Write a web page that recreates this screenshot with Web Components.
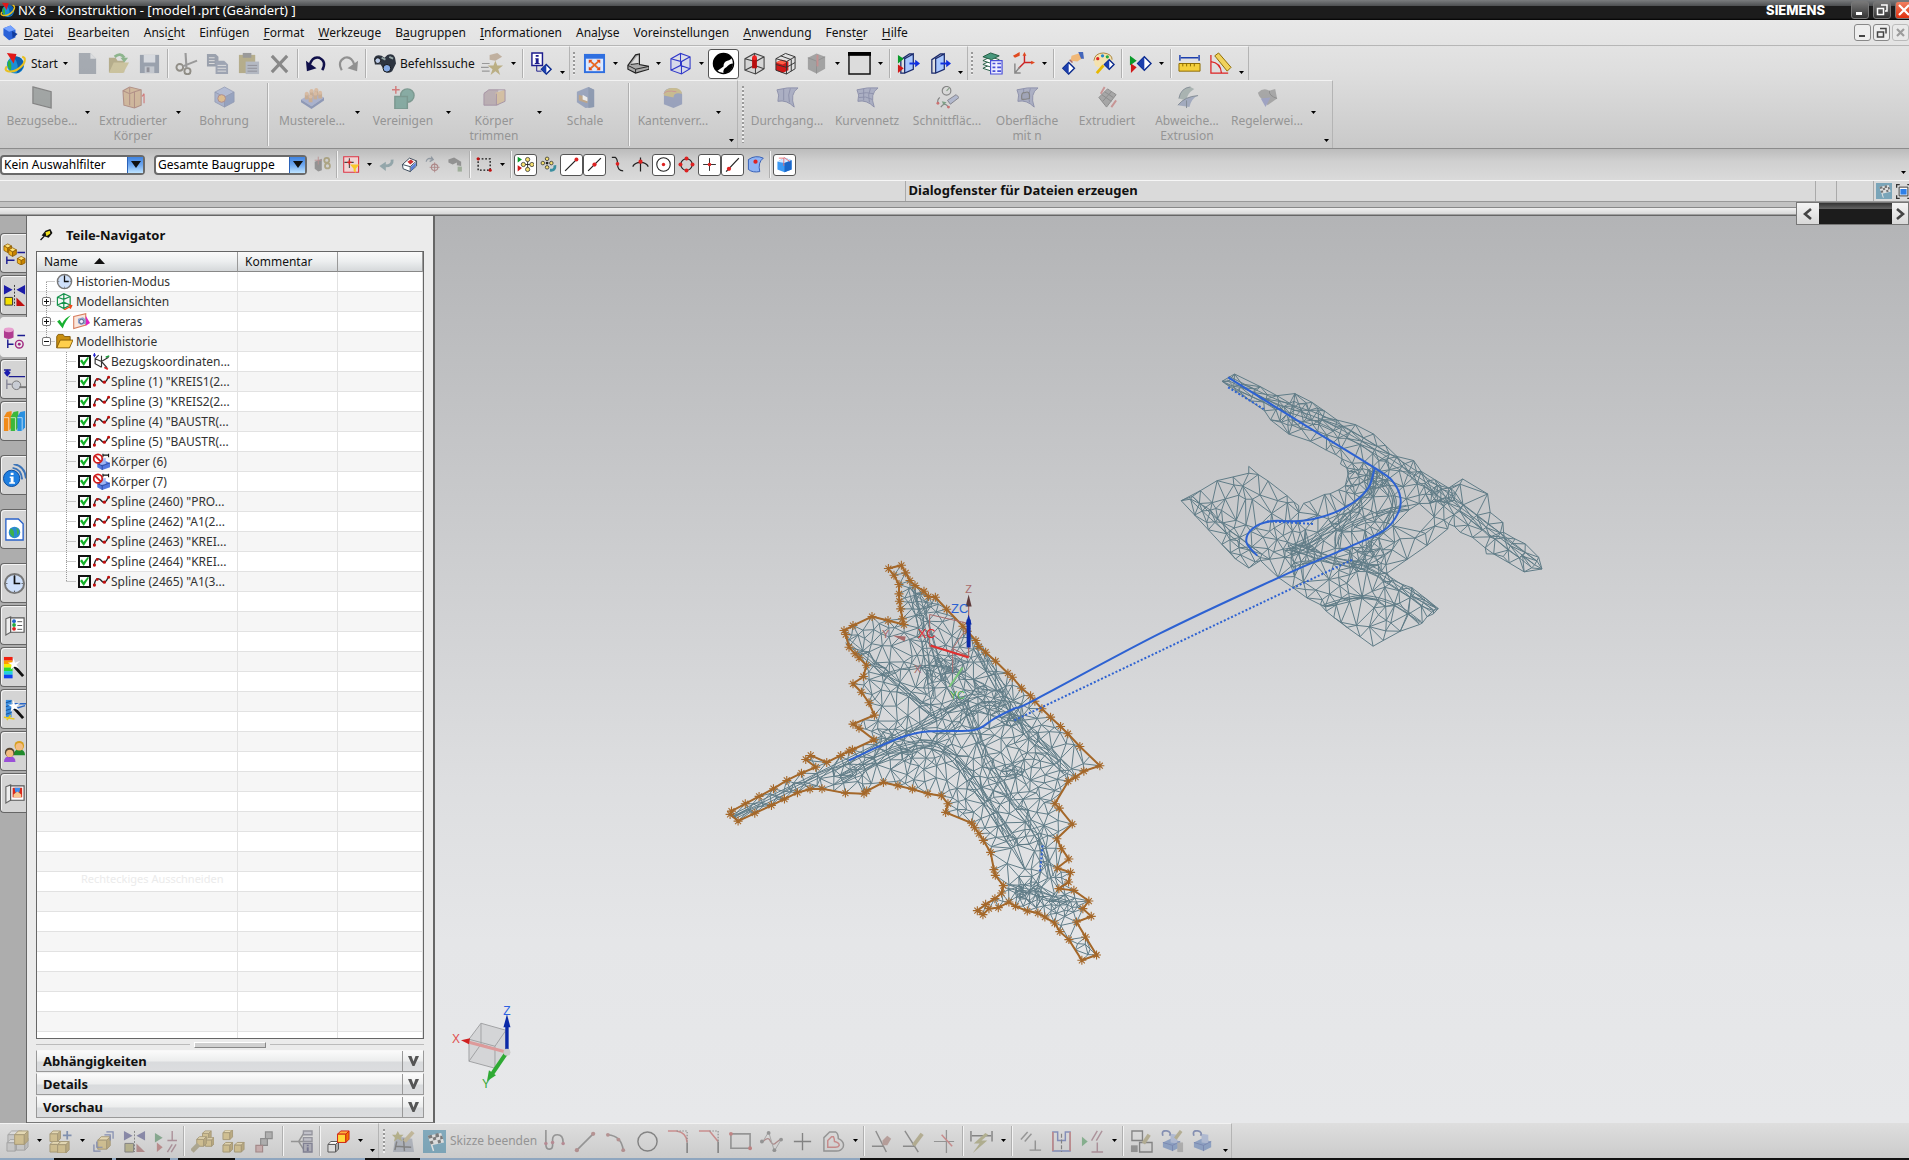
<!DOCTYPE html>
<html lang="de">
<head>
<meta charset="utf-8">
<title>NX 8 - Konstruktion</title>
<style>
html,body{margin:0;height:100%;overflow:hidden}
body{font:12px/16px "Noto Sans","Open Sans",sans-serif;color:#111;background:#d0d0d0}
</style>
</head>
<body>
<nx-app></nx-app>
<script>
const cube=(x,y,s,t='#ffe27a',l='#f2b21c',r='#c98400',k='#8a5a00')=>{const h=s/2,q=s*.27;return `<g stroke="${k}" stroke-width=".8" stroke-linejoin="round"><path fill="${t}" d="M${x} ${y+q}L${x+h} ${y}L${x+s} ${y+q}L${x+h} ${y+2*q}Z"/><path fill="${l}" d="M${x} ${y+q}L${x+h} ${y+2*q}V${y+s+1}L${x} ${y+s-q+1}Z"/><path fill="${r}" d="M${x+s} ${y+q}L${x+h} ${y+2*q}V${y+s+1}L${x+s} ${y+s-q+1}Z"/></g>`};
const box3=(x,y,s,t,l,r,k)=>{const d=s*.28,e=s-d;return `<g stroke="${k}" stroke-width="1" stroke-linejoin="round"><path fill="${t}" d="M${x} ${y+d}L${x+d} ${y}H${x+s}L${x+e} ${y+d}Z"/><path fill="${l}" d="M${x} ${y+d}H${x+e}V${y+s}H${x}Z"/><path fill="${r}" d="M${x+e} ${y+d}L${x+s} ${y}V${y+e}L${x+e} ${y+s}Z"/></g>`};
const gold=(x,y,s)=>box3(x,y,s,'#f0d890','#c9a850','#a08030','#7a6020');
const P=(d,s='#333',w=1.4,f='none',x='')=>`<path d="${d}" stroke="${s}" stroke-width="${w}" fill="${f}" ${x}/>`;
const F=(d,f)=>`<path d="${d}" fill="${f}"/>`;
const C=(x,y,r,f='#c01010',s='none',w=1)=>`<circle cx="${x}" cy="${y}" r="${r}" fill="${f}" stroke="${s}" stroke-width="${w}"/>`;
const wire=(f='#c9d0ff55',k='#3038c8')=>P('M2 7L12 1.5L22 5V17.500L13 23L2 19ZM2 7L13 10L22 5M13 10V23M2 19L12 14L22 17.500M12 1.500V14',k,1.1,f);
const nxlogo='<circle cx="12" cy="13.500" r="9" fill="#1c8fd6"/>'+F('M5 8Q9 12 7 20Q2 14 5 8','#2fb43a')+F('M10 5Q18 3 21 12Q20 20 13 22.500Q17 14 10 5','#0b5fae')+P('M3 15Q0 19 4 20Q12 22 20 13Q24 6 19 5','#e9c020',2.200)+F('M3 1L13 2L10 12Z','#e01818');
const dia=(x,y,s=6)=>`<path d="M${x} ${y-s}L${x+s} ${y}L${x} ${y+s}L${x-s} ${y}Z" fill="#fff" stroke="#0b2a8c" stroke-width="1.500"/><path d="M${x} ${y-s}L${x} ${y+s}L${x-s} ${y}Z" fill="#1c3fae"/>`;
const surf=F('M1 4Q12 1 23 2Q14 8 19 22Q11 14 2 16Q4 9 1 4','#8088b0')+P('M1 4Q12 1 23 2Q14 8 19 22Q11 14 2 16Q4 9 1 4M8 3Q8 9 8 15M15 2.500Q12 9 14 17','#454c80',1);
const flag=F('M0 0H24V24H0Z','#2c7a9f')+P('M6 6L11 22','#eee',1.500)+F('M5 6L19 3L22 13L9 16Z','#e4e4e4')+F('M5 6l4-1l1 3l-4 1zM13 4l3-1l1 4l-4 1zM10 8l3-1l1 3l-3 1zM18 6l2 0l1 3l-3 1zM7 12l3-1l1 3l-3 1zM15 11l3-1l1 3l-3 1z','#222');
const door=F('M8 7L17 2V18L8 22Z','#a9c8ff')+P('M8 7L17 2V18L8 22ZM8 22H4V8L13 2H17','#1a2a6c',1.300)+P('M13 12H22','#1030e0',2)+F('M19 8L24 12L19 16Z','#1030e0');
const plug=F('M2 13L10 9L20 12V18L12 22L2 18Z','#4a6fb0')+F('M10 4L17 5V14L10 13Z','#8a9ecc')+P('M2 13L12 16L20 12M12 16V22','#25408f',1);
const person=(x,y,h,b)=>F(`M${x-6} ${y+10}Q${x-6} ${y+4} ${x} ${y+4}Q${x+6} ${y+4} ${x+6} ${y+10}Z`,b)+C(x,y,5,h)+C(x,y+1,3.800,'#f3bd83');
const clock=C(12,12,10,'#cfe0fa','#777',2)+P('M12 4V12H18','#111',1.800)+P('M12 3.500v1M12 19.500v1M3.500 12h1M19.500 12h1','#333',1.200);
const wand=P('M12 11L21 21','#111',3)+F('M11 2L12.500 7L18 5L14 9L17 13L12 11L8 14L9 9L5 7L10 6.500Z','#fff');
const cross=P('M12 3V21M3 12H21','#333',1.400);
const book=P('M3 5L8 3V19L3 22Z','#666',1.200,'#eee')+P('M8 4H22V19H8Z','#555',1.200,'#fff');
const ICONS={
nx:nxlogo,
part:F('M2 6L12 2L19 8V19L10 23L2 16Z','#2a62d8')+F('M2 6L12 2L19 8L10 11Z','#74a2ff')+F('M14 10L22 14L15 20Z','#123c9c'),
new:F('M3 1H15L21 7V23H3Z','#6c7684')+F('M15 1L21 7H15Z','#d7dade'),
open:F('M2 6H9L11 9H18V21H2Z','#8c7c3a')+F('M2 22L7 11H23L17 22Z','#b8a860')+P('M8 5Q14 0 18 6','#3c8a3c',3)+F('M14 6H22L18 11Z','#3c8a3c'),
save:F('M2 3H22V22H2Z','#56647c')+F('M6 3H18V11H6Z','#cfd5df')+F('M7 15H17V22H7Z','#a9b2c0')+F('M9 16H12V21H9Z','#445'),
cut:C(5,16,3.500,'none','#443f30',2)+C(13,20,3.200,'none','#443f30',2)+P('M11 1L12 17M8 15L23 9','#555',2.200),
copy:F('M1 2H10L13 5V15H1Z','#56627a')+P('M3 6H9M3 9H9M3 12H9','#ddd',1)+F('M10 9H19L23 13V23H10Z','#5f6c88')+P('M12 14H21M12 17H21M12 20H21','#ddd',1),
paste:F('M2 3H19V22H2Z','#8c7c3a')+F('M6 1H15V6H6Z','#555')+F('M9 10H23V23H9Z','#8a94a8')+P('M11 14H21M11 17H21M11 20H21','#445',1),
del:P('M4 4L20 21M20 4L4 21','#333',3.200),
undo:P('M5 13Q8 4 15 6Q23 10 18 19','#10104a',2.600)+F('M1 9L2 20L12 17Z','#10104a'),
redo:P('M19 13Q16 4 9 6Q1 10 6 19','#444',2.200)+F('M23 9L22 20L12 17Z','#444'),
bino:F('M1 7Q3 2 9 4L12 6L15 3Q21 1 23 6L24 12L20 20Q14 24 11 18L8 13L2 13Z','#2d3440')+C(5,9,3,'#b8c8e6','#111')+C(14.500,17,4,'#84a9e4','#111')+P('M9 6L13 8M17 5L21 7','#9aa',2),
star:F('M15 9L17 14L23 14L18 18L20 24L15 20L10 24L12 18L7 14L13 14Z','#98802c')+F('M9 3L17 1L22 5L15 9L9 8Z','#a08060')+P('M1 12H9M0 16H8M1 20H9','#555',1.300),
info:P('M2 1H13V14H2Z','#1c1c8c',1.500,'#fff')+F('M6 3h3v2h-3zM5.500 6.500h3.500v5h1v1h-5v-1h1v-4h-.5z','#1c1c8c')+P('M7 14V20H12','#1c1c8c',1)+dia(17,18,5),
fit:F('M1 2H23V22H1Z','#2f6fe0')+F('M3 7H21V20H3Z','#dce9ff')+P('M7 9L17 18M17 9L7 18','#e86a28',2)+F('M6 8h4l-4 4zM18 8h-4l4 4zM6 19h4l-4-4zM18 19h-4l4-4z','#e04a18'),
orient:P('M2 14L10 3L14 2V13L24 15V18L10 22L2 18Z','#222',1.200,'#aaa')+F('M5 13L11 5L13 4V12Z','#ddd')+P('M2 14L10 18L24 15M10 18V22M5 13L13 12','#222',1),
wire:wire(),
render:C(12,12,10.500,'#fff','#000',1.400)+F('M14 1.700A10.500 10.500 0 0 0 5 20L12 15Q12 10 16 9Q21 8 20 5Q18 2 14 1.700','#000')+F('M22 12A10.500 10.500 0 0 1 12 22.500Q11 18 15 16Q18 12 22 12','#000'),
cyl:wire('#bbb4','#444')+F('M9.500 6H14.500V17H9.500Z','#b80d0d')+C(12,6,2.500,'#e22'),
redcube:F('M2 11L8 8L15 10V19L9 22L2 19Z','#d01818')+F('M2 11L8 8L15 10L9 13Z','#ff6048')+P('M2 7L12 1.500L22 5V17.500L13 23L2 19ZM2 7L13 10L22 5M13 10V23M7 4L18 8V20M2 13L13 16L22 11','#333',1),
graycube:F('M3 6L12 1.500L21 5V17.500L12 22.500L3 18Z','#666')+P('M3 6L12 9.500L21 5M12 9.500V22.500','#444',1)+P('M13 3V15','#a44',2),
bgsq:P('M1 1H23V23H1Z','#111',1.500,'#dcdcdc')+F('M0 0H24V4H0Z','#000'),
doorin:door+F('M1 3L7 7L1 12Z','#0a9a2a')+F('M1 13L7 17L1 22Z','#d01818'),
door:door,
layers:[12,8,4,0].map(i=>F(`M2 ${5+i}L10 ${1+i}L19 ${4+i}L11 ${8+i}Z`,i?'#fff':'#48987c')+P(`M2 ${5+i}L10 ${1+i}L19 ${4+i}L11 ${8+i}Z`,'#245c44',1)).join('')+P('M10 9H22V23H10Z','#4a50d8',1.200,'#eef')+P('M12 12h3M12 16h3M12 20h3M17 12h4M17 16h4M17 20h4','#4a50d8',1.800),
wcs:P('M13 3V11L21 11M13 11L7 17','#c22',1.500)+F('M1 4L8 0L8 4L3 6ZM11 4L13 0L15 4ZM20 9L24 11L20 13Z','#e04a20')+P('M3 12V22H9M3 22L8 16','#888',1.500),
edit:dia(8,17,6)+F('M11 4L20 1L23 6L17 10L10 9Z','#f0b878')+P('M9 8L12 11','#a66',1.500)+F('M18 0L23 0L24 7L21 7Z','#46b'),
palette:F('M2 9Q3 1 12 1Q21 2 21 8Q21 12 15 11Q12 12 13 16Q6 17 3 14Z','#f4e2b0')+P('M2 9Q3 1 12 1Q21 2 21 8','#a8843c',1)+C(6,7,1.700,'#d22')+C(11,4,1.700,'#28c')+C(16,5,1.700,'#2a4')+P('M12 14L5 22','#e8b800',3)+dia(18,13,5),
show:F('M1 4L8 9L1 14Z','#0a9a2a')+F('M2 12L8 16L2 22Z','#d01818')+dia(16,12,7),
ruler:P('M2 3V9M22 3V9M3 6H21','#1c3fae',1.500)+F('M1 12H23V20H1Z','#f4cf3c')+P('M1 12H23V20H1ZM5 12v3M9 12v3M13 12v3M17 12v3','#8c6a00',1),
angle:P('M2 3V22H20M2 10Q12 11 13 22','#d22',1.300)+F('M6 4L10 1L23 16L19 20Z','#f0d25c')+P('M6 4L10 1L23 16L19 20Z','#8c6a00',1),
plane:P('M2 1L21 6V23L2 18Z','#333',1.300,'#6c7472'),
extr:F('M1 5L8 1L20 4V20L13 23L2 20Z','#c99a65')+P('M1 5L8 1L20 4V20L13 23L2 20ZM1 5L8 8L13 6L20 4M13 6V23M8 8V20M8 2V7','#8c4c3a',1.100)+P('M23 18V8M21 11L23 8','#c22',1.200),
hole:cube(2,1,20,'#8ea0d0','#7f90c0','#5870a8','#506090')+C(9,13,4,'#e0a34c','#844'),
patt:F('M0 14L13 7L24 12L11 21Z','#7f90c8')+F('M0 14V17L11 24L24 15V12L11 21Z','#4a5e98')+[[6,12],[11,9],[16,8],[10,15],[15,12],[20,11]].map(p=>F(`M${p[0]-2} ${p[1]-4}h4v6h-4z`,'#b98555')+C(p[0],p[1]-4,2,'#d8a070')).join(''),
unite:C(16,10,7,'#3a8070','#245c4c',1.500)+P('M3 11H16V24H3Z','#245c4c',1.500,'#3a8070')+P('M4 0V8M0 4H8','#c22',1.500),
trim:F('M1 7L6 4H16V20H1Z','#a08890')+F('M13 7L23 4V16L14 20Z','#d0a870')+P('M1 8L6 4H23V16L14 20M14 8V20M1 8V20H14','#757',1),
shell:F('M3 6L15 1L21 4V22L12 23L3 17Z','#5f74a4')+F('M15 1L21 4V22L15 23Z','#48608c')+F('M5 9L14 12V18L5 15Z','#a87840')+F('M9 9L14 12V16L9 14Z','#fff'),
edge:F('M2 8Q2 2 12 2Q21 3 21 9V19L12 23L2 19Z','#5f70a4')+F('M2 8Q3 2 12 2Q20 2 21 8Q12 6 12 12L2 10Z','#b9a04c')+P('M2 8Q4 4 15 6','#b55',1),
surf1:surf, surf2:surf+P('M3 8Q11 6 18 8M3 12Q10 10 17 14','#454c80',1),
sect:C(11,5,4.500,'none','#333',1.200)+P('M11 5L14 2','#363',1.200)+P('M4 12Q1 14 2 18','#333',1.200)+C(2,18,1.500)+F('M12 15L21 9L24 12L15 19Z','#8f9cc6')+P('M12 15L21 9L24 12L15 19Z','#334',1)+P('M5 22Q9 16 13 22','#333',1.200)+F('M6 16L11 17L8 20Z','#2a6a3a')+C(13,22,1.500),
surfn:surf+P('M6 14Q5 6 9 7Q15 4 14 13Q10 14 6 14','#333',1.200,'#6a7298'),
surfe:F('M3 12L12 3L21 9L11 22Z','#777')+P('M3 12L12 3L21 9L11 22ZM6 9L16 16M9 6L18 12M7 16L16 6','#444',1)+P('M5 8L9 1M16 22L21 15','#b55',2),
dev:F('M3 13Q5 2 15 1L19 3Q11 8 11 15Z','#7c908c')+F('M2 20Q9 11 23 10Q16 13 14 22Z','#7080a8')+P('M3 13Q5 2 15 1M2 20Q9 11 23 10M11 15V23','#345',1),
rule:F('M2 7Q8 1 14 5L20 3L22 13L12 20L9 14Q4 14 2 7','#777')+F('M5 13L15 12L10 22Z','#6a72b0')+P('M14 5Q13 10 22 13','#444',1),
mirror:P('M12 1V23','#333',1,'none','stroke-dasharray="2 1.500"')+F('M1 1L10 6L1 11ZM23 1L14 6L23 11Z','#1c1ca8')+P('M2 14H10V22H2Z','#333',1,'#f4e000')+F('M14 14L23 23H14Z','#c01010'),
mirrord:P('M12 1V23','#333',1,'none','stroke-dasharray="2 1.500"')+F('M1 1L10 6L1 11ZM23 1L14 6L23 11Z','#3c3c78')+P('M2 14H11V23H2Z','#333',1,'#98904c')+F('M14 14L23 23H14Z','#904848'),
asm:box3(2,1,14,'#ddd','#bbb','#aaa','#777')+box3(1,10,12,'#ddd','#bbb','#aaa','#777')+box3(11,9,12,'#ddd','#bbb','#aaa','#777')+gold(9,1,14),
add:gold(1,1,11)+gold(1,12,11)+gold(9,12,12)+P('M19 1V10M14.500 5.500H23.500','#2c4c88',1.800),
move:gold(6,7,13)+P('M15 2H22V9M12 0M2 15V22H9M5 12V18H11M13 5H19V11','#33468c',1.300),
cons:F('M1 3L9 8L1 13Z','#3a7a4a')+F('M3 13L9 18L3 23Z','#a04848')+P('M19 1V11M14 11H24','#845060',1.500)+P('M14 23L19 15M18 23L23 15','#845060',1.500),
expl:gold(12,1,9)+gold(15,8,9)+gold(6,7,10)+P('M1 22L8 15','#887c50',5),
expl2:gold(1,0,10)+gold(1,13,10)+gold(13,13,10),
seq:P('M13 2h7v7h-7zM8 9h7v7h-7z','#444',1.200,'#888')+P('M3 16h7v7h-7z','#744',1.200,'#b88'),
wavel:P('M1 12H10M14 4L9 12L14 20M9 12H14','#555',1.500)+P('M14 1H23V5H14ZM14 8H23V12H14Z','#556',1.400,'#aab')+P('M14 14H23V23H14Z','#335',1.400,'#889')+P('M18.500 18V22M18.500 15.500V17','#225',2),
color:box3(1,12,11,'#fff','#ddd','#aaa','#555')+box3(11,1,12,'#ffb040','#ffd83c','#f07800','#d02010'),
sketch:F('M3 10L8 7L21 9L23 23H1Z','#8890a0')+P('M5 12L3 21M4 17L20 18M12 9L13 22','#333',1.500)+P('M13 12L22 2','#a9955c',4)+F('M6 1L8 5L12 5L9 8L11 12L6 9L2 12L3 8L0 5L4 5Z','#908840'),
flag:flag,
profile:P('M3 0V15Q3 20 7 20Q10 20 10 16V10Q10 5 15 5Q21 5 21 13','#555',1.700)+C(3,14,1.800,'#945')+C(10,13,1.800,'#945')+C(21,14,1.800,'#945'),
line:P('M3 21L20 4','#555',1.700)+C(3,21,2.200,'#945050')+C(20,4,2.200,'#945050'),
arc:P('M3 5Q17 6 19 21','#555',1.700)+C(3,5,2,'#945050')+C(14,10,2,'#945050')+C(19,21,2,'#945050'),
circle:C(12,12,10,'none','#333',1.500),
fillet:P('M1 1H10Q21 3 21 13','#b44',1.600)+P('M10 1H21V12','#444',1.200,'none','stroke-dasharray="1.500 1.500"')+P('M21 13V24','#333',1.600),
chamf:P('M1 1H12L21 12','#b44',1.600)+P('M12 1H21V12','#444',1.200,'none','stroke-dasharray="1.500 1.500"')+P('M21 12V24','#333',1.600),
rect:P('M2 4H22V19H2Z','#555',1.700)+C(2,4,2,'#a33')+C(22,19,2,'#a33'),
spl:P('M3 12Q9 6 11 12Q14 17 17 13L21 10','#844',1.400)+P('M3 12L9 2L15 22L22 10','#777',1)+C(2,12,2,'#555')+C(9,3,2,'#555')+C(15,21,2,'#555')+C(22,10,2,'#555'),
pt:cross,
off:P('M2 22V8L8 2H14Q17 3 17 9Q24 12 22 18Q20 22 15 22Z','#555',1.500)+P('M6 18V11L10 7H12Q13 9 13 12Q18 13 18 16Q17 18 14 18Z','#b44',1.500),
qtrim:P('M1 17H13M5 1L16 23','#444',1.500)+F('M12 11L17 6L21 9L17 16L12 16Z','#986860'),
qext:P('M1 17H14M3 1L17 23','#444',1.500)+P('M12 16L21 4','#908450',4),
corner:P('M1 12H22M14 0V24','#555',1.300)+P('M9 5L20 17','#b44',1.600),
dim:P('M1 1V12M23 1V12M2 6H22','#333',1.500)+F('M16 3L4 14H10L3 24L18 11H12L19 5Z','#8c884c'),
geo:P('M2 10L9 2M6 12L13 4M17 11V21M11 21H23','#555',1.500),
sym:P('M3 2H8V11H16V2H21V22H3Z','#33489c',1.500)+P('M3 2V22M21 2V22','#a44',1.700)+P('M12 4V23','#333',1.200,'none','stroke-dasharray="4 2"'),
auto:F('M1 7L7 12L1 17Z','#3a8a4a')+P('M11 11L17 1M16 11L22 1M17 13V23M11 23H23','#845060',1.500),
pencil:P('M2 1H13V11H2ZM10 13H23V23H10Z','#333',1.400)+P('M14 14L20 5','#908450',4)+F('M1 16H8V23H1Z','#555'),
link1:plug+P('M2 6Q0 0 6 1Q11 2 9 6','#33488c',1.800)+P('M15 9L21 1','#908450',3.500)+F('M17 13H23V23H17Z','#888'),
link2:plug+P('M2 6Q0 0 6 1Q11 2 9 6','#33488c',1.800),
find:F('M1 8L11 4V20L6 22L1 18Z','#555')+P('M6 1V12M1 6H11','#a55',1.200)+C(18,6,3.500,'none','#8a7a3a',2.500)+C(19,14,3.500,'none','#8a7a3a',2.500),
filt:P('M1 1H22V23H1Z','#d34',1.500,'#f0d4d4')+P('M9 3V17M2 9H15','#444',1.500)+P('M6 9H12M9 6V12','#d22',2)+F('M10 12H23L18 18V24L15 21V18Z','#f8c828'),
back:P('M20 5Q21 14 10 14','#567c84',4)+F('M11 8V21L2 14Z','#567c84'),
erase:F('M2 12L12 3L22 7V14L13 22L3 18Z','#fff')+P('M2 12L12 3L22 7V14L13 22L3 18ZM2 12L13 15L22 7M13 15V22','#345',1.300)+F('M9 8L14 5L18 8L13 12Z','#c33')+F('M14 15L21 9V14L14 21Z','#5b80d8'),
rot:P('M3 8Q5 1 12 5M10 1L13 5L8 8','#567',1.800)+C(15,16,4.500,'none','#8a4040',1.500)+P('M15 9V23M8 16H22','#8a4040',1.300),
pick:F('M2 5L10 2L20 8V14L14 13V9L8 12L2 9Z','#555')+F('M15 15H21V22H15Z','#6a8860'),
box:P('M3 4H20V20H3Z','#111',1.800,'none','stroke-dasharray="2.500 2.500"')+C(3,4,2.200)+C(20,20,2.200),
snap:F('M1 1L7 5L1 9Z','#0a9a2a')+F('M1 13L7 17L1 22Z','#d01818')+C(15,5,3,'#f5e070','#222')+C(9,12,3,'#f5e070','#222')+C(21,12,3,'#f5e070','#222')+C(15,19,3,'#f5e070','#222')+P('M15 8V16M12 12H18','#222',1.300),
snap2:C(10,4,2.500,'#f5e070','#222')+C(4,10,2.500,'#f5e070','#222')+C(16,10,2.500,'#f5e070','#222')+C(10,10,2,'#222')+C(10,16,2.500,'#f5e070','#222')+P('M21 13Q22 21 14 20','#3b8fa0',4),
end:P('M3 21L20 4','#222',1.800)+C(19,5,2.800,'#d22'),
mid:P('M3 21L21 3','#222',1.800)+C(12,12,3,'#d22'),
ctrl:P('M4 2H9Q12 4 12 11Q12 21 20 21','#222',1.700)+C(12,11,2.600,'#d22'),
inter:P('M12 2V22M1 15Q4 9 12 9Q20 9 23 15','#222',1.700)+C(12,8,3,'#d22'),
center:C(12,12,9.500,'none','#222',1.500)+C(12,12,2.400,'#d22'),
quad:C(12,12,8,'none','#222',1.500)+C(12,3.500,2.800,'#d22')+C(12,20.500,2.800,'#d22')+C(3.500,12,2.800,'#d22')+C(20.500,12,2.800,'#d22'),
exist:cross+C(12,12,2.500,'#d22'),
curve:P('M3 22L21 3','#222',1.800)+C(7,18,3,'#d22'),
face:F('M2 5Q12 -2 23 3Q15 9 18 22Q8 24 2 19Z','#8fb4f4')+P('M2 5Q12 -2 23 3Q15 9 18 22Q8 24 2 19Z','#2450b0',1.200)+C(12,8,3,'#d22'),
solid:F('M2 8L12 2L22 6V19L12 23L2 19Z','#3d9af4')+F('M2 8L12 2L22 6L12 10Z','#d4e8ff')+F('M12 10L22 6V19L12 23Z','#1a66c8')+P('M4 3H11V14M11 2L20 8','#e66',1.200),
r1:cube(1,2,8)+cube(6,6,8)+cube(15,15,8)+P('M15 11H23M4 15V23M4 19H12','#1c1c90',1.500),
r3:F('M1 4V12Q6 15 11 12V4Z','#b03c90')+'<ellipse cx="6" cy="4" rx="5" ry="2.500" fill="#e8a0d0"/>'+P('M15 10H23M5 14V23M5 19H11','#1c1c90',1.500)+C(17,19,4,'none','#a02880',1.500)+C(17,19,1.500,'#a02880'),
r4:P('M1 2H8M4.500 2V8M6 9H23','#1c1c90',1.500)+F('M1 5L4.500 1.500L8 5L4.500 9Z','#1c1cb0')+P('M4 12V22M4 17H9','#889',1.500)+C(14,18,4.500,'#c8ccd4','#777')+P('M17 20H24','#777',2),
r5:[['#f08a18',1],['#3cb83c',8],['#2a90e0',15]].map(a=>F(`M${a[1]} 7L${a[1]+3} 2L${a[1]+8} 1V18L${a[1]+5} 22H${a[1]}Z`,a[0])+P(`M${a[1]+5} 8V22M${a[1]} 8H${a[1]+5}`,'#fffa',1)).join(''),
r6:C(9,15,8.500,'#1f7fe0','#0b4a9c')+F('M8 9h3v2.500h-3zM7 13h4v6h1.500v1.500h-6v-1.500h1.500v-4.500h-1z','#fff')+P('M10 4Q19 5 20 16M11 0Q23 2 24 15','#3c74b8',2),
r7:P('M3 1H16L21 6V23H3Z','#2a62c8',1.400,'#fff')+C(12,15,6,'#2a8ad0')+F('M8 11Q13 12 11 20Q7 18 7 13ZM14 10Q19 14 15 18Z','#3cb04c'),
clock:clock,
r9:book+C(11.500,7.500,2,'#26c')+C(11.500,11.500,2,'#2a4')+C(11.500,15.500,2,'#d22')+P('M15 8h5M15 12h5M15 16h5','#555',1),
r10:['#f02010','#ff9a00','#f4f000','#30d830','#20d0e0','#1040f0'].map((c,i)=>`<rect x="1" y="${1+i*3.700}" width="9" height="3.800" fill="${c}"/>`).join('')+wand,
r11:F('M3 2H9V20H3Z','#3c8fe0')+P('M3 5l6-2M3 9l6-2M3 13l6-2M3 17l6-2','#134f98',1)+P('M10 6H24M10 12L23 8','#2a68c8',1.500)+P('M1 20L12 22M4 23L8 18','#e8c820',1.600)+wand,
r12:person(17,6,'#d8a020','#1f8a2c')+person(7,13,'#5a4630','#9a50d8'),
r13:book+F('M10 6H20V16H10Z','#d82a1c')+F('M12 6H18L17 11H13Z','#3c8ff0')+F('M11 13L15 10L19 13V16H11Z','#f8c890'),
views:P('M2 6L11 1L20 5V17L11 22L2 17ZM2 6L11 9L20 5M11 9V22M2 17L11 13L20 17M11 1V13','#16934c',1.700)+P('M11 24L22 18M18 17L22 18L20 22','#f04a18',2),
camera:P('M1 5L18 1V17L1 22Z','#d67a5a',1.500,'#fbe6dc')+F('M18 4L24 14L18 18Z','#e020c0')+F('M7 8L14 6L18 9V15L11 17L7 14Z','#8ba4d0')+C(12,12,3,'#eef','#446'),
folder:F('M1 5L3 2H10L12 5H20V20H1Z','#c98f10')+F('M1 21L6 10H24L19 21Z','#ffcf4c')+P('M1 21L6 10H24L19 21ZM1 21V5L3 2H10L12 5H20V10','#7c5400',1.200),
csys:P('M12 4V20M12 12L22 6M12 12L20 21M12 12L3 8M12 20L3 15V8L8 3','#333',1.600)+P('M2 0V6M0 3H4','#22c',1.500)+P('M18 6L23 4','#1a9a3a',2)+P('M16 20L21 23','#d22',2.400),
spline:P('M2 16Q3 9 7 8Q10 8 13 12Q17 16 21 7','#222',1.900)+C(2,17,2.300)+C(6,9,2)+C(16,13,2.300)+C(22,6,2.200),
body:F('M6 15L17 11L24 14V20L13 24L6 20Z','#5278e0')+F('M10 8L18 7V16L10 17Z','#9fb6f2')+P('M6 15L13 18L24 14M13 18V24','#24408c',1)+P('M14 3H22M14 1V6M22 1V6','#111',1.500)+C(7,8,6,'#fff','#d01c1c',2.500)+P('M3 4L11 12','#d01c1c',2.500),
check:F('M1 12L5 9L9 15Q14 6 23 2Q14 11 10 23Z','#18b030'),
pin:F('M3 14L10 5L19 2L23 9L16 18Z','#111')+F('M10 8L18 5L19 10L12 15Z','#f0e020')+P('M1 22L8 15','#111',2.500),
grow:P('M1 6V1H6M18 1H23V6M23 18V23H18M6 23H1V18','#333',2)+P('M5 5H19V19H5Z','#333',1.500,'#fff')+F('M7 8H17V17H7Z','#2f80e8')
};
const svg=(n,s)=>`<svg viewBox="0 0 24 24" width="${s}" height="${s}" aria-hidden="true">${ICONS[n]||''}</svg>`;
const BTN='button{font:inherit;color:inherit;border:0;background:none;padding:0;margin:0;display:flex;align-items:center;justify-content:center}svg{display:block;flex:none}';
const def=(tag,css,html)=>customElements.define(tag,class extends HTMLElement{connectedCallback(){if(this.shadowRoot)return;const r=this.attachShadow({mode:'open'});r.innerHTML=`<style>*{box-sizing:border-box}${BTN}${css}</style>${typeof html==='function'?html(this):html}`}});

/* toolbar parts */
def('nx-sep',':host{flex:none;width:6px;align-self:stretch;display:flex;justify-content:center;padding:2px 0}:host([wide]){width:10px}i{width:2px;background:linear-gradient(90deg,#b0b0b0 50%,#f4f4f4 50%)}','<i></i>');
def('nx-grip',':host{flex:none;width:9px;align-self:stretch;display:flex;justify-content:center;padding:5px 0}i{width:2px;background:repeating-linear-gradient(#999 0 2px,#eee 2px 4px)}','<i></i>');
def('nx-drop',':host{flex:none;width:12px;display:flex;align-self:stretch}button{width:100%;padding-bottom:1px}:host([low]) button{align-items:flex-end;padding-bottom:6px}:host([mid]){width:13px}:host([mid]) button{padding-bottom:4px}','<button aria-label="Mehr"><svg width="5" height="3" viewBox="0 0 5 3"><path d="M0 0H5L2.5 3Z" fill="#000"/></svg></button>');
def('nx-tool',':host{flex:none;display:flex;width:31px;height:30px}:host([label]){width:auto}:host([small]){width:23px;height:22px}button{width:100%;height:100%;gap:4px}:host([on]) button{border:1px solid #555;border-radius:3px;background:#fff}:host([off]) svg{opacity:.5}:host([off]) button{color:#949494}:host([label]) button{padding:0 2px 0 4px}',
 e=>`<button aria-label="${e.getAttribute('label')||e.getAttribute('icon')}">${svg(e.getAttribute('icon'),e.hasAttribute('small')?17:23)}<slot></slot></button>`);
def('nx-big',':host{flex:none;width:78px;display:flex;align-self:stretch}:host([w]){width:80px}button{width:100%;flex-direction:column;justify-content:flex-start;color:#959595;padding-top:5px;line-height:15px;gap:4px}svg{opacity:.5}',
 e=>`<button>${svg(e.getAttribute('icon'),23)}<span><slot></slot></span></button>`);
def('nx-toolbar',':host{display:flex;align-items:center;border-top:1px solid #f2f2f2;border-right:1px solid #b4b4b4}','<slot></slot>');
def('nx-select',':host{display:flex;width:145px;height:20px}label{display:flex;flex:1;border:2px solid #6a6a6a;border-radius:4px;background:#fff}select{appearance:none;border:0;background:none;font:inherit;color:#000;flex:1;min-width:0;padding:0 0 0 2px;margin:0;line-height:16px}i{width:16px;border-left:1px solid #2a62b8;background:linear-gradient(#3f83e0,#6fa8f0 50%,#bfe4ff);display:flex;align-items:center;justify-content:center}',
 e=>`<label><select aria-label="${e.getAttribute('name')}"><option>${e.getAttribute('value')}</option></select><i><svg width="10" height="7" viewBox="0 0 10 7"><path d="M0 0H10L5 7Z" fill="#111"/></svg></i></label>`);

/* title and menu */
def('nx-title',':host{display:flex;align-items:center;height:20px;background:linear-gradient(#7a7c7e 0,#4c4e50 6px,#1c1c1c 6px,#1c1c1c 18px,#000);color:#fff;gap:2px}h1{font:13px/16px "Noto Sans",sans-serif;margin:0;flex:1}b{font:800 13px/16px Inter,sans-serif;margin-right:22px}button{width:18px;height:18px;border:1px solid #777;border-radius:3px;background:linear-gradient(#777,#333);margin-left:2px}.x{background:linear-gradient(#f08060,#e03010);margin-right:-4px}',
 `${svg('nx',16)}<h1>NX 8 - Konstruktion - [model1.prt (Geändert) ]</h1><b>SIEMENS</b>
 <button aria-label="Minimieren"><svg width="12" height="12"><path d="M2 8h6v3H2z" fill="#fff"/></svg></button><button aria-label="Wiederherstellen"><svg width="12" height="12"><path d="M5 1h6v6h-2M1.500 4.500h6v6h-6z" fill="none" stroke="#fff" stroke-width="1.500"/></svg></button><button class="x" aria-label="Schließen"><svg width="12" height="12"><path d="M1 1L11 11M11 1L1 11" stroke="#fff" stroke-width="2.200"/></svg></button>`);
def('nx-menu',':host{display:flex;align-items:center;height:26px;padding-left:2px;border-bottom:1px solid #b6b6b6}nav{display:flex;flex:1;gap:14px;padding-left:5px}u{text-underline-offset:2px}.w{width:17px;height:17px;border:1px solid #888;border-radius:3px;background:#eee;margin-left:2px;color:#555}.w:last-child{opacity:.45}',
 svg('part',17)+'<nav>'+['<u>D</u>atei','<u>B</u>earbeiten','Ansi<u>c</u>ht','Einfügen','<u>F</u>ormat','<u>W</u>erkzeuge','B<u>a</u>ugruppen','<u>I</u>nformationen','Ana<u>l</u>yse','Voreinstellungen','<u>A</u>nwendung','Fenst<u>e</u>r','<u>H</u>ilfe'].map(t=>`<button><span>${t}</span></button>`).join('')+'</nav><button class="w" aria-label="Fenster minimieren"><svg width="11" height="11"><path d="M2 8h6v2H2z" fill="#444"/></svg></button><button class="w" aria-label="Fenster wiederherstellen"><svg width="11" height="11"><path d="M4 1.500h6v5M1.500 5h6v5h-6z" fill="none" stroke="#444" stroke-width="1.500"/></svg></button><button class="w" aria-label="Fenster schließen"><svg width="11" height="11"><path d="M2 2L9 9M9 2L2 9" stroke="#444" stroke-width="2.200"/></svg></button>');
def('nx-cue',':host{display:flex;height:22px;border-top:1px solid #f6f6f6;border-bottom:1px solid #999;background:#dadada}.l{flex:905 1 0;border-right:1px solid #aaa}.t{flex:907 1 0;padding-left:3px;font:bold 13px/18px "Noto Sans",sans-serif}.s{width:21px;border-left:1px solid #aaa}.m{width:37px}.i{display:flex;width:36px;gap:4px;border-left:1px solid #aaa;align-items:center;padding-left:2px;overflow:hidden}.i svg:first-child{opacity:.55}',
 `<div class="l"></div><div class="t">Dialogfenster für Dateien erzeugen</div><div class="s"></div><div class="s m"></div><div class="i">${svg('flag',16)}${svg('grow',15)}</div>`);

/* left side */
def('nx-rail',':host{display:flex;flex-direction:column;gap:2px;width:27px;flex:none;padding-top:17px;background:#adadad;border-right:1px solid #666}button{height:40px;width:26px;border:1px solid #666;border-width:1px 0 1px 1px;border-radius:4px 0 0 4px;background:#d4d4d4;box-shadow:inset 1px 1px #f4f4f4;padding-left:1px;flex:none}.a{background:#ebebeb;border-color:#ebebeb;width:27px;box-shadow:none}.g{margin-top:12px}',
 [['r1'],['mirror'],['r3','a'],['r4'],['r5'],['r6','g'],['r7','g'],['clock','g'],['r9'],['r10'],['r11'],['r12'],['r13']].map(a=>`<button class="${a[1]||''}" aria-label="${a[0]}">${svg(a[0],23)}</button>`).join(''));
def('nx-tree',':host{display:block;flex:1;min-height:0;overflow:hidden;border:1px solid #666;background:#fff}table{border-collapse:separate;border-spacing:0;table-layout:fixed;width:100%;color:#333}th{font-weight:normal;text-align:left;color:#111;height:20px;background:linear-gradient(#fafafa,#eceeef 50%,#d5d8da);border-bottom:1px solid #888;border-right:1px solid #999;padding:0 0 0 7px}th svg{display:inline-block;margin-left:13px;vertical-align:2px}td{height:20px;padding:0;border-bottom:1px solid #e2e2e2;border-right:1px solid #e2e2e2;overflow:hidden;white-space:nowrap}tr:nth-child(even) td{background:#f6f6f6}td>div{display:flex;align-items:center;height:19px}td .c{gap:1px}.r .ic{margin-left:1px}.r span{padding-left:3px}td .ghost{color:#ebebeb;padding-left:44px;font-size:11px;align-items:flex-start;line-height:13px}input{appearance:none;width:13px;height:13px;margin:0 1px 0 0;border:2px solid #111;background:#fff;display:grid;flex:none}input::before{content:"";background:#14b428;clip-path:polygon(0 45%,22% 25%,40% 55%,85% 0,100% 8%,42% 100%)}',
 ()=>{const dot='stroke="#999" stroke-dasharray="1 1"';
 const roots=[['clock','Historien-Modus',0,0],['views','Modellansichten',1,0],['camera','Kameras',1,1],['folder','Modellhistorie',2,0]];
 const kids=[['csys','Bezugskoordinaten...'],['spline','Spline (1) "KREIS1(2...'],['spline','Spline (3) "KREIS2(2...'],['spline','Spline (4) "BAUSTR(...'],['spline','Spline (5) "BAUSTR(...'],['body','Körper (6)'],['body','Körper (7)'],['spline','Spline (2460) "PRO...'],['spline','Spline (2462) "A1(2...'],['spline','Spline (2463) "KREI...'],['spline','Spline (2464) "KREI...'],['spline','Spline (2465) "A1(3...']];
 let h='<table><colgroup><col style="width:201px"><col style="width:100px"><col></colgroup><thead><tr><th>Name <svg width="11" height="6"><path d="M0 6L5.500 0L11 6Z" fill="#111"/></svg></th><th>Kommentar</th><th></th></tr></thead><tbody>';
 const row=c=>{h+=`<tr><td>${c}</td><td></td><td></td></tr>`};
 roots.forEach((r,i)=>{const box=r[2]?`<rect x="5.500" y="5.500" width="8" height="8" rx="1.500" fill="#fff" stroke="#777"/><path d="M7 9.500h5${r[2]==1?'M9.500 7v5':''}" stroke="#111"/>`:'';
  row(`<div class="r"><svg width="18" height="19"><path d="M9.500 ${i?0:10}V${i==3?6:19}M9.500 9.500H18" ${dot}/>${box}</svg>${r[3]?`<svg width="16" height="15" viewBox="0 0 24 24" class="ic">${ICONS.check}</svg>`:''}<svg class="ic" width="17" height="17" viewBox="0 0 24 24">${ICONS[r[0]]}</svg><span>${r[1]}</span></div>`)});
 kids.forEach((k,i)=>row(`<div class="c"><svg width="40" height="19"><path d="M29.500 0V${i==11?10:19}M29.500 9.500H39" ${dot}/></svg><input type="checkbox" checked aria-label='${k[1]}'>${svg(k[0],17)}<span>${k[1]}</span></div>`));
 for(let i=0;i<23;i++)row(i==14?'<div class="ghost">Rechteckiges Ausschneiden</div>':'');
 return h+'</tbody></table>'});
def('nx-fold',':host{display:flex;height:22px;border:1px solid #999;border-top-color:#f8f8f8;background:linear-gradient(#fbfbfb,#eceded 50%,#d9dbdd 55%,#dcdddf)}button{width:100%;font:bold 13px/16px "Noto Sans",sans-serif;justify-content:flex-start;padding-left:6px}span{flex:1;text-align:left}i{width:21px;align-self:stretch;border-left:1px solid #999;display:flex;align-items:center;justify-content:center}','<button><span><slot></slot></span><i><svg width="13" height="10"><path d="M1 0H4.500L6.500 5.500L8.500 0H12L7.500 10H5.500Z" fill="#555"/></svg></i></button>');
def('nx-navigator',':host{display:flex;flex-direction:column;width:408px;flex:none;background:#ebebeb;border-right:2px solid #666;border-bottom:1px solid #777;padding:0 9px 4px}header{display:flex;align-items:center;height:35px;flex:none;gap:13px;padding:2px 0 0 4px}h2{font:bold 13px/16px "Noto Sans",sans-serif;margin:0}.split{display:flex;align-items:center;gap:4px;height:11px;flex:none}.split hr{flex:1;border:0;border-top:1px solid #bbb;margin:0}.split i{width:72px;height:6px;background:#d0d0d0;border:1px solid;border-color:#fff #888 #888 #fff}.f{display:flex;flex-direction:column;gap:1px}',
 `<header>${svg('pin',13)}<h2>Teile-Navigator</h2></header><nx-tree></nx-tree><div class="split"><hr><i></i><hr></div><div class="f"><nx-fold>Abhängigkeiten</nx-fold><nx-fold>Details</nx-fold><nx-fold>Vorschau</nx-fold></div>`);

/* 3D view: terrain meshes triangulated from outlines, roads and scattered points */
const pts=(s,ox,oy)=>s.trim().split(/\s+/).map(p=>p.split(',').map(Number)).map(([x,y])=>[ox+x/3,oy+y/3]);
let seed=7;const rnd=()=>(seed=(seed*16807)%2147483647)/2147483647;
const inside=(p,g)=>{let c=false;for(let i=0,j=g.length-1;i<g.length;j=i++){const a=g[i],b=g[j];if((a[1]>p[1])!=(b[1]>p[1])&&p[0]<(b[0]-a[0])*(p[1]-a[1])/(b[1]-a[1])+a[0])c=!c}return c};
const along=(l,step)=>{const o=[];for(let i=1;i<l.length;i++){const a=l[i-1],b=l[i],d=Math.hypot(b[0]-a[0],b[1]-a[1]),n=Math.max(1,Math.round(d/step));for(let k=0;k<n;k++)o.push([a[0]+(b[0]-a[0])*k/n,a[1]+(b[1]-a[1])*k/n])}o.push(l[l.length-1]);return o};
function smooth(p){let d=`M${p[0][0].toFixed(1)} ${p[0][1].toFixed(1)}`;for(let i=0;i<p.length-1;i++){const a=p[i-1]||p[i],b=p[i],c=p[i+1],e=p[i+2]||c;d+=`C${[b[0]+(c[0]-a[0])/6,b[1]+(c[1]-a[1])/6,c[0]-(e[0]-b[0])/6,c[1]-(e[1]-b[1])/6,c[0],c[1]].map(v=>v.toFixed(1)).join(' ')}`}return d}
function delaunay(P){const n=P.length,Q=P.concat([[-9000,-9000],[12000,-9000],[1000,14000]]);
 const mk=(a,b,c)=>{const[ax,ay]=Q[a],[bx,by]=Q[b],[cx,cy]=Q[c],d=2*(ax*(by-cy)+bx*(cy-ay)+cx*(ay-by));if(Math.abs(d)<1e-9)return null;const A=ax*ax+ay*ay,B=bx*bx+by*by,D=cx*cx+cy*cy,x=(A*(by-cy)+B*(cy-ay)+D*(ay-by))/d,y=(A*(cx-bx)+B*(ax-cx)+D*(bx-ax))/d;return{v:[a,b,c],x,y,r:(ax-x)**2+(ay-y)**2}};
 let T=[mk(n,n+1,n+2)];
 for(let i=0;i<n;i++){const[x,y]=Q[i],keep=[],E=new Map();
  for(const t of T){if((t.x-x)**2+(t.y-y)**2<t.r){const[a,b,c]=t.v;for(const[e,f]of[[a,b],[b,c],[c,a]]){const k=e<f?e*9999+f:f*9999+e;E.has(k)?E.set(k,null):E.set(k,[e,f])}}else keep.push(t)}
  for(const e of E.values())if(e){const t=mk(e[0],e[1],i);if(t)keep.push(t)}T=keep}
 return T.filter(t=>t.v.every(v=>v<n))}
/* clusters: [x, y, radius, points] patches of finer survey data */
function mesh(outline,roads,count,holes,edge,clusters){
 const pool=along(outline.concat([outline[0]]),edge).map(p=>[p[0]+(rnd()-.5)*.2,p[1]+(rnd()-.5)*.2]);
 let lines='';
 for(const[r,offs]of roads)for(const o of offs){const m=r.map((p,i)=>{const a=r[Math.max(0,i-1)],b=r[Math.min(r.length-1,i+1)],d=Math.hypot(b[0]-a[0],b[1]-a[1])||1;return[p[0]-(b[1]-a[1])/d*o,p[1]+(b[0]-a[0])/d*o]});lines+=smooth(m);for(const p of along(m,15))if(inside(p,outline))pool.push([p[0]+rnd()*2,p[1]+rnd()*2])}
 const ok=p=>inside(p,outline)&&!holes.some(h=>inside(p,h));
 for(const[cx,cy,cr,cn]of clusters)for(let i=0;i<cn;i++){const a=rnd()*6.283,q=cr*Math.sqrt(rnd()),p=[cx+Math.cos(a)*q,cy+Math.sin(a)*q*.7];if(ok(p))pool.push(p)}
 const xs=outline.map(p=>p[0]),ys=outline.map(p=>p[1]),x0=Math.min(...xs),x1=Math.max(...xs),y0=Math.min(...ys),y1=Math.max(...ys);
 let k=0,g=0;while(k<count&&g++<20000){const p=[x0+rnd()*(x1-x0),y0+rnd()*(y1-y0)];if(ok(p)&&pool.every(q=>Math.hypot(q[0]-p[0],q[1]-p[1])>5)){pool.push(p);k++}}
 const seen=new Set();let d='';
 for(const t of delaunay(pool)){const v=t.v.map(i=>pool[i]),c=[(v[0][0]+v[1][0]+v[2][0])/3,(v[0][1]+v[1][1]+v[2][1])/3];if(!inside(c,outline)||holes.some(h=>inside(c,h)))continue;
  for(const[a,b]of[[0,1],[1,2],[2,0]]){const e=t.v[a],f=t.v[b],k=Math.min(e,f)*9999+Math.max(e,f);if(seen.has(k))continue;seen.add(k);d+=`M${pool[e].map(n=>n.toFixed(1))}L${pool[f].map(n=>n.toFixed(1))}`}}
 return d+lines}
def('nx-view',':host{display:block;flex:1;min-width:0;min-height:0;background:linear-gradient(#b3b4b6,#cdced0 38%,#dddee0 62%,#e5e6e8 80%,#e7e8ea)}svg{width:100%;height:100%}text{font-family:"Liberation Sans",sans-serif}',()=>{
 const L=s=>pts(s,700,540),R=s=>pts(s,1160,350);
 const left=L('563,84 602,74 615,97 628,120 643,135 670,152 683,168 704,170 738,206 787,257 800,272 826,300 835,318 855,335 885,362 922,398 935,410 963,443 990,466 1003,482 1024,505 1050,530 1080,558 1102,580 1138,618 1198,676 1150,692 1125,710 1103,722 1063,790 1076,803 1115,851 1069,895 1083,925 1105,956 1070,983 1110,996 1104,1025 1075,1045 1120,1050 1165,1082 1147,1105 1172,1128 1128,1145 1155,1190 1188,1244 1144,1260 1105,1198 1078,1174 1062,1148 1033,1130 1012,1118 980,1112 945,1098 925,1085 893,1102 865,1105 847,1123 830,1111 855,1092 883,1075 903,1058 908,1036 884,1005 880,988 870,936 848,900 835,880 822,862 813,848 735,816 742,790 722,766 682,760 635,746 548,726 498,752 490,760 434,758 364,745 328,746 290,757 212,795 112,842 88,822 92,812 175,768 218,745 258,720 302,698 345,680 315,657 330,645 378,666 420,645 445,632 455,628 520,598 475,563 457,551 521,524 505,487 482,455 457,430 488,408 497,374 475,352 463,340 445,320 435,282 430,270 457,255 514,228 610,252 605,235 600,205 596,182 595,160 595,132 580,104');
 const right=R('185,92 222,70 300,108 350,135 403,129 455,155 530,208 585,222 640,250 710,318 760,330 782,362 865,412 907,385 982,430 990,485 1028,515 1030,545 1065,565 1095,580 1135,620 1145,655 1092,664 1000,610 978,610 975,592 900,545 865,520 862,535 800,585 680,668 755,712 834,774 778,822 720,842 668,870 638,887 560,830 520,800 497,782 480,762 440,742 353,680 300,630 265,652 225,625 62,450 120,420 170,390 265,368 265,347 380,435 415,465 415,485 430,458 555,405 560,352 540,340 545,325 450,272 385,250 330,208 312,180');
 const roadsL=[[L('100,828 350,706 530,618 700,530 800,470'),[-2.5,0,2.5]],[L('420,715 520,660 600,625 690,612 760,650 830,745 900,850 940,915'),[-4,-2,1,4]],[L('440,300 560,400 690,515'),[-2,1,3]],[L('625,140 665,300 690,470'),[-3,1]],[L('650,160 710,360 760,470'),[-2,2]],[L('830,315 900,440 980,570 1100,690'),[-4,-1,2,5]],[L('790,480 850,640 920,760 1010,880 1050,1010'),[-3,0,3]],[L('540,400 700,375 850,430'),[0]],[L('700,600 850,490 960,540'),[-2,2]],[L('920,1040 1000,1060 1100,1090'),[-3,1]]];
 const roadsR=[[R('200,88 350,160 480,205 600,270 760,370 900,470 1120,640'),[-4,0,4]],[R('640,360 630,430 560,500 480,560 390,605'),[-3,0,3,6]],[R('90,440 200,540 300,615'),[-2,2]],[R('400,590 520,630 620,650 720,710 820,778'),[-3,0,3]],[R('490,765 600,738 700,760 780,815'),[-1,1]],[R('530,590 540,540 650,490 740,470'),[-2,2]],[R('680,400 700,470 620,600 580,655'),[-2,2]]];
 const hole=R('738,512 782,470 825,492 770,548');
 const mL=mesh(left,roadsL,230,[],15,[[945,668,22,55],[985,700,22,50],[1010,720,12,25],[1030,892,16,55],[1060,905,18,30],[1012,770,12,24],[905,755,8,12],[880,735,12,10],[925,600,22,25]]);
 const mR=mesh(right,roadsR,130,[hole],20,[[1300,555,20,35],[1365,555,22,45],[1440,495,16,30],[1300,415,22,25],[1375,480,14,30],[1360,475,20,20]]);
 const mid=along(left.concat([left[0]]),19);
 const stars=mid.map(([x,y])=>`M${(x-4.5).toFixed(1)} ${y.toFixed(1)}h9m-4.500-4.500v9m-3-7.500l6 6m0-6l-6 6`).join('');
 const main=smooth(R('203,80 420,215 643,352 695,390 720,440 712,490 670,540 560,592 353,682 0,848').concat(L('1003,478 940,505 880,535 840,562 800,571 680,573 610,588 530,620 445,660')));
 const loop=smooth(R('643,352 625,410 580,455 520,487 460,505 400,512 330,512 275,535 258,575 290,615'));
 const dots=`M${R('575,628').join(' ')}L${L('940,540').join(' ')}M${R('203,110').join(' ')}L${R('310,175').join(' ')}M${R('320,512').join(' ')}L${R('460,520').join(' ')}M${L('1026,915').join(' ')}L${L('1018,995').join(' ')}`;
 return `<svg viewBox="434 216 1475 906" preserveAspectRatio="xMidYMid meet" fill="none" role="img" aria-label="Modell">
 <path d="${mL}${mR}" stroke="#5f7b87" stroke-width="1"/>
 <path d="M${left.map(p=>p.map(v=>v.toFixed(1))).join('L')}Z" stroke="#a5682a" stroke-width="2"/><path d="${stars}" stroke="#a5682a" stroke-width="1.100"/>
 <path d="M968 656L929 646V614L968 623M968 656L952 648V672M952 648L966 628" stroke="#a86a6a" stroke-width="1"/>
 <path d="M968 657V600" stroke="#a86a6a" stroke-width="1.200"/><path d="M968 594L965 606H971Z" fill="#5e3a3a"/><path d="M966 619h4v28h-4z" fill="#0b2aa8"/><path d="M968 614L965 624H971Z" fill="#0b2aa8"/>
 <path d="M968 657L930 645" stroke="#e03030" stroke-width="2"/><path d="M892 635L905 636L904 641Z" fill="#a86a6a"/><path d="M962 667L949 686" stroke="#7cc87c" stroke-width="2"/>
 <g font-size="11" text-anchor="middle"><text x="968" y="592" fill="#a86a6a">Z</text><text x="959" y="612" fill="#2d62d2" font-size="13">ZC</text><text x="926" y="637" fill="#e03030" font-size="13">XC</text><text x="885" y="637" fill="#a86a6a">Y</text><text x="917" y="673" fill="#a86a6a">X</text><text x="957" y="699" fill="#4caf50">YC</text></g>
 <path d="${main}${loop}" stroke="#2d62d2" stroke-width="2"/><path d="${dots}" stroke="#2d62d2" stroke-width="2" stroke-dasharray="2 2"/>
 <path d="M480 1023L505 1030V1052L494 1068L468 1061V1039Z" fill="#c4c5c788" stroke="#a2a3a5"/><path d="M468 1039L494 1046L505 1030M494 1046V1068M480 1023V1044L468 1061M480 1044L505 1052" stroke="#a2a3a5"/>
 <path d="M506 1052L468 1042" stroke="#dd9a9a" stroke-width="3"/><path d="M460 1040L469 1038L468 1044Z" fill="#d02020"/>
 <path d="M506 1052L491 1074" stroke="#2faa34" stroke-width="4"/><path d="M486 1081L488 1070L495 1075Z" fill="#2faa34"/><path d="M506 1050V1026" stroke="#0b2aa8" stroke-width="3.400"/><path d="M506 1014L502.500 1027H509.500Z" fill="#0b2aa8"/><circle cx="506" cy="1052" r="3.500" fill="#ccc"/>
 <g font-size="12" text-anchor="middle"><text x="506" y="1015" fill="#2d62e2">Z</text><text x="455" y="1043" fill="#e05050">X</text><text x="485" y="1088" fill="#3aaa3a">Y</text></g></svg>`});

const T=list=>list.split(' ').map(n=>n=='|'?'<nx-sep></nx-sep>':n=='v'?'<nx-drop></nx-drop>':n=='_'?'<nx-drop low></nx-drop>':n[0]=='+'?`<nx-tool on icon="${n.slice(1)}"></nx-tool>`:n[0]=='-'?`<nx-tool off icon="${n.slice(1)}"></nx-tool>`:`<nx-tool icon="${n}"></nx-tool>`).join('');
const S=l=>T(l).replace(/<nx-tool/g,'<nx-tool small');
const B=(i,t,w)=>`<nx-big ${w?'w':''} icon="${i}">${t}</nx-big>`,D='<nx-drop mid></nx-drop>',W='<nx-sep wide></nx-sep>';
def('nx-app',`:host{display:flex;flex-direction:column;height:100vh;overflow:hidden}
.top{background:linear-gradient(#e8e8e8,#dedede 40%,#c9c9c9);border-bottom:1px solid #8c8c8c}.row{display:flex}.row nx-toolbar{height:34px}.row.big nx-toolbar{height:68px}.big nx-toolbar:first-child{padding-left:3px}
.sel{display:flex;align-items:center;height:31px;background:linear-gradient(#bcbcbc,#d0d0d0 40%,#dadada)}.sel nx-select+nx-select{margin-left:9px;width:153px}.sel nx-select+nx-tool{margin-left:4px}.sp{flex:1}
.band{height:14px;flex:none;background:linear-gradient(#c2c2c2 5px,#888 5px,#888 6px,#f0f0f0 6px,#d8d8d8 12px,#666 13px);display:flex;justify-content:flex-end;position:relative;z-index:1}
.scroll{display:flex;height:23px;width:113px;flex:none;background:linear-gradient(#333,#666 30%,#1c1c1c 30%);border:1px solid #777}.scroll button{width:22px;background:linear-gradient(#f4f4f4,#d8d8d8)}.scroll i{flex:1}.scroll button:last-child{width:16px}
main{flex:1;display:flex;min-height:0}.bot{display:flex;background:linear-gradient(#dedede,#cbcbcb);flex:none}.bot nx-toolbar{height:35px}.bot nx-toolbar:first-child{padding-left:2px}.task{height:2px;flex:none;background:linear-gradient(90deg,#8fa6bf 54px,#111 54px 112px,#8fa6bf 112px 116px,#111 116px 170px,#8fa6bf 170px 178px,#111 178px 235px,#8fa6bf 235px 365px,#111 365px 420px,#8fa6bf 420px 860px,#111 860px)}`,
`<nx-title></nx-title><div class="top"><nx-menu></nx-menu>
<div class="row"><nx-toolbar><nx-tool label="Start" icon="nx">Start</nx-tool><nx-drop></nx-drop>${T('-new -open -save | -cut -copy -paste -del | undo -redo |')}<nx-tool label="Befehlssuche" icon="bino">Befehlssuche</nx-tool>${T('-star v | info _')}</nx-toolbar>
<nx-toolbar><nx-grip></nx-grip>${T('fit v orient v wire v +render cyl redcube -graycube v bgsq v | doorin door _')}</nx-toolbar>
<nx-toolbar><nx-grip></nx-grip>${T('layers wcs v | edit palette | show v | ruler angle _')}</nx-toolbar></div>
<div class="row big"><nx-toolbar>${B('plane','Bezugsebe...')+D+B('extr','Extrudierter<br>Körper')+D+B('hole','Bohrung')+W+B('patt','Musterele...')+D+B('unite','Vereinigen')+D+B('trim','Körper<br>trimmen')+D+B('shell','Schale')+W+B('edge','Kantenverr...')+D}<nx-drop low></nx-drop></nx-toolbar>
<nx-toolbar><nx-grip></nx-grip>${B('surf1','Durchgang...',1)+B('surf2','Kurvennetz',1)+B('sect','Schnittfläc...',1)+B('surfn','Oberfläche<br>mit n',1)+B('surfe','Extrudiert',1)+B('dev','Abweiche...<br>Extrusion',1)+B('rule','Regelerwei...',1)+D}<nx-drop low></nx-drop></nx-toolbar></div></div>
<div class="sel"><nx-select name="Auswahlfilter" value="Kein Auswahlfilter"></nx-select><nx-select name="Bereich" value="Gesamte Baugruppe"></nx-select>${S('-find | filt v -back erase -rot -pick | box v | +snap snap2 +end +mid ctrl inter +center quad +exist +curve face | +solid')}<div class="sp"></div><nx-drop low></nx-drop></div>
<nx-cue></nx-cue><div class="band"><div class="scroll"><button aria-label="Links"><svg width="10" height="12"><path d="M8 1L2 6L8 11" fill="none" stroke="#444" stroke-width="2.600"/></svg></button><i></i><button aria-label="Rechts"><svg width="10" height="12"><path d="M2 1L8 6L2 11" fill="none" stroke="#444" stroke-width="2.600"/></svg></button></div></div>
<main><nx-rail></nx-rail><nx-navigator></nx-navigator><nx-view></nx-view></main>
<div class="bot"><nx-toolbar>${T('-asm v -add v -move -mirrord -cons | -expl -expl2 -seq | -wavel | color v _')}</nx-toolbar><nx-toolbar><nx-grip></nx-grip>${T('-sketch')}<nx-tool off label="Skizze beenden" icon="flag">Skizze beenden</nx-tool>${T('-profile -line -arc -circle -fillet -chamf -rect -spl -pt -off v | -qtrim -qext -corner | -dim v | -geo -sym -auto v | -pencil -link1 -link2 _')}</nx-toolbar></div><div class="task"></div>`);
</script>
</body>
</html>
